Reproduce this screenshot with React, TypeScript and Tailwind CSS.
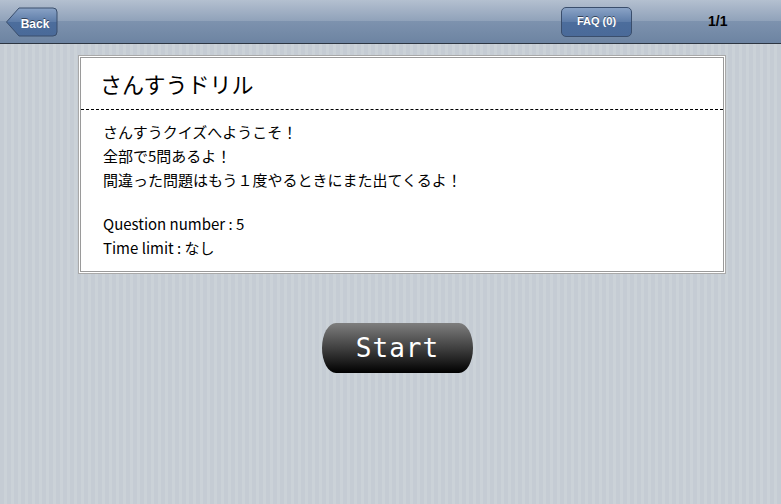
const jp = { fontFamily: '"Noto Sans CJK JP", "Noto Sans", sans-serif' };

const BackButton = () => (
    <button className="relative h-[30px] w-[52px] text-white">
        <svg className="absolute inset-0" width="52" height="30" viewBox="0 0 52 30">
            <defs>
                <linearGradient id="backg" x1="0" y1="0" x2="0" y2="1">
                    <stop offset="0" stopColor="#8aa3c6" />
                    <stop offset="0.5" stopColor="#5d7ca8" />
                    <stop offset="0.5" stopColor="#4c6d9c" />
                    <stop offset="1" stopColor="#4a6a99" />
                </linearGradient>
            </defs>
            <path d="M0.5 15 L13 1 H47 Q51 1 51 5 V25 Q51 29 47 29 H13 Z" fill="url(#backg)" stroke="#3a4e6c" strokeWidth="1" />
        </svg>
        <span className="relative pl-[6px] text-[12px] font-bold [text-shadow:0_-1px_0_rgba(0,0,0,0.5)]" style={{ fontFamily: '"Liberation Sans", Arial, sans-serif' }}>
            Back
        </span>
    </button>
);

export default function App() {
    return (
        <div className="relative w-[781px] h-[504px] overflow-hidden bg-[repeating-linear-gradient(90deg,#c5ccd4_0px,#c5ccd4_4px,#cbd2d8_4px,#cbd2d8_7px)]">
            <div className="h-[44px] flex items-center px-[6px] border-b border-[#2d3642] bg-[linear-gradient(#b4c0d0,#8fa1b9_50%,#7d92ae_50%,#6d84a2)]">
                <BackButton />
                <div className="flex-1" />
                <button
                    className="h-[30px] w-[71px] rounded-[5px] border border-[#3a4e6c] text-white text-[11px] font-bold bg-[linear-gradient(#8aa3c6,#5d7ca8_50%,#4c6d9c_50%,#4a6a99)] [text-shadow:0_-1px_0_rgba(0,0,0,0.5)]"
                    style={{ fontFamily: '"Liberation Sans", Arial, sans-serif' }}
                >
                    FAQ (0)
                </button>
                <div className="w-[143px] pl-[76px] text-[14px] font-bold text-black" style={{ fontFamily: '"Liberation Sans", Arial, sans-serif' }}>
                    1/1
                </div>
            </div>

            <div className="ml-[78px] w-[648px] mt-[11px] border border-[#a9a9a9] p-px bg-white">
                <div className="border border-[#9a9a9a] bg-white" style={jp}>
                    <div className="h-[52px] flex items-center px-[19px] border-b border-dashed border-black text-[22px] text-black">
                        さんすうドリル
                    </div>
                    <div className="px-[22px] pt-[10px] pb-[11px] text-[15px] leading-[24px] text-black">
                        <div>さんすうクイズへようこそ！</div>
                        <div>全部で5問あるよ！</div>
                        <div>間違った問題はもう１度やるときにまた出てくるよ！</div>
                        <div className="h-[20px]" />
                        <div>Question number : 5</div>
                        <div>Time limit : なし</div>
                    </div>
                </div>
            </div>

            <div className="flex mt-[49px] pl-[322px]">
                <button
                    className="h-[50px] w-[151px] rounded-[14px/25px] bg-[linear-gradient(#7e7e7e,#3a3a3a_55%,#000)] text-white text-[26px] tracking-[1px]"
                    style={{ fontFamily: '"DejaVu Sans Mono", "Liberation Mono", monospace' }}
                >
                    Start
                </button>
            </div>
        </div>
    );
}
